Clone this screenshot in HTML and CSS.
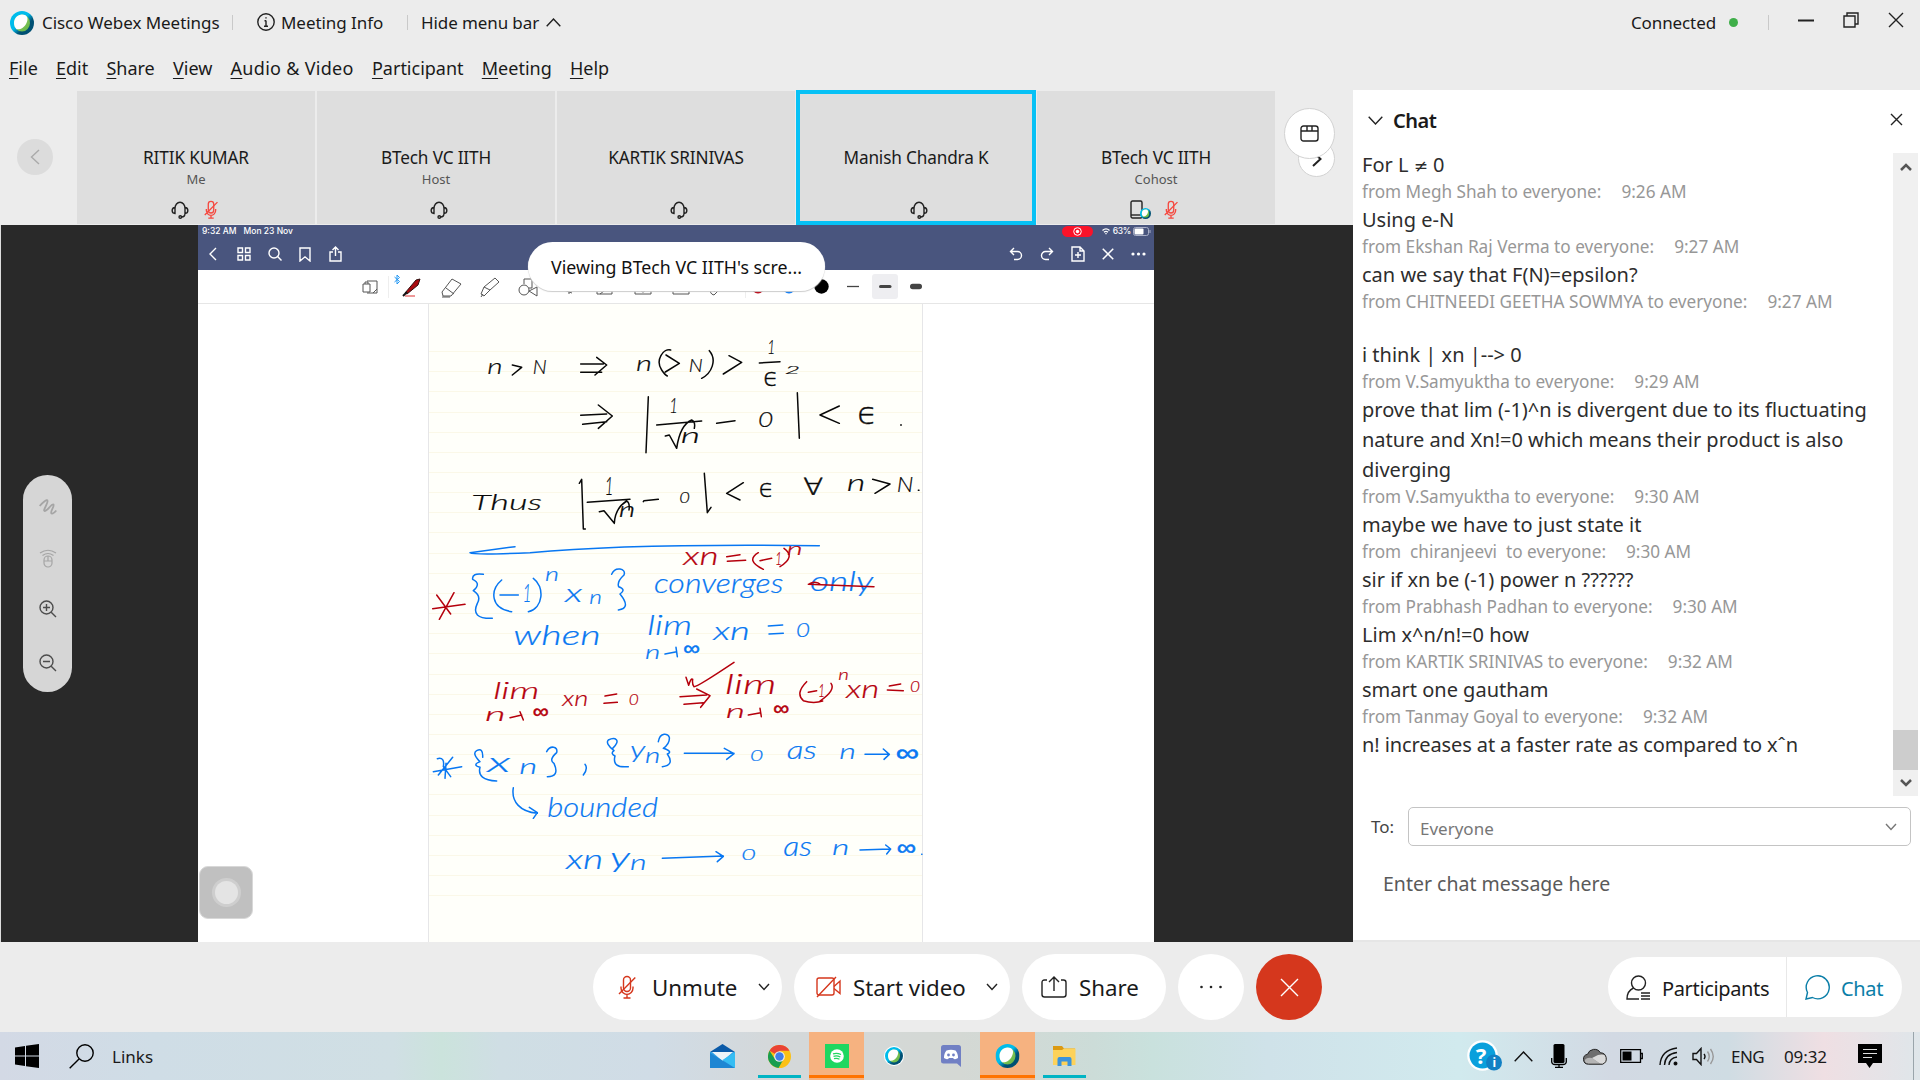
FILE: index.html
```html
<!DOCTYPE html>
<html lang="en">
<head>
<meta charset="utf-8">
<title>Cisco Webex Meetings</title>
<link rel="stylesheet" href="styles.css">
</head>
<body>
<svg class="defs" width="0" height="0">
  <defs>
    <linearGradient id="ring" x1="0" y1="0" x2="1" y2="1"><stop offset=".45" stop-color="#00bceb"/><stop offset=".65" stop-color="#005073"/></linearGradient>
    <linearGradient id="leaf" x1="0" y1="0" x2="1" y2="1"><stop offset="0" stop-color="#a5d867"/><stop offset="1" stop-color="#5fb345"/></linearGradient>
    <symbol id="webex" viewBox="0 0 24 24"><circle cx="12" cy="12" r="12" fill="url(#ring)"/><ellipse cx="12" cy="12" rx="8" ry="8.600" fill="url(#leaf)"/><path d="M4 12C4 7 7.500 3.400 12 3.400C18 3.400 18.500 8 16.500 12C14.500 16.500 10 19 6.500 18.200C4.800 16.500 4 14.500 4 12Z" fill="#fff"/></symbol>
    <symbol id="headset" viewBox="0 0 18 18"><path d="M4 11.500V7.500A5 6.300 0 0 1 14 7.500V11.500M4 6.500C.2 6.800.2 12.300 4 12.500ZM14 6.500C17.800 6.800 17.800 12.300 14 12.500ZM14 12.500C14 14.500 13 16 10.500 16"/><circle cx="9.300" cy="16" r="1.300"/></symbol>
    <symbol id="mic-off" viewBox="0 0 18 24"><rect x="5.500" y="1.500" width="7" height="15" rx="3.500"/><path d="M3 11.500V13A6 6.500 0 0 0 9 19.500A6 6.500 0 0 0 15 13V11.500M9 19.500V23M5.500 23H12.500M1 19L17.300 2.500"/></symbol>
    <symbol id="down" viewBox="0 0 12 8"><path d="M1 1L6 6.500L11 1"/></symbol>
    <symbol id="cross" viewBox="0 0 16 16"><path d="M1 1L15 15M15 1L1 15"/></symbol>
  </defs>
</svg>

<header class="titlebar">
  <svg class="logo" width="24" height="24"><use href="#webex"/></svg>
  <span class="app-name">Cisco Webex Meetings</span>
  <i class="sep sep-a"></i>
  <svg class="icon info" width="18" height="18" viewBox="0 0 18 18"><circle cx="9" cy="9" r="8.200"/><path d="M9 7.500V13.500M7.500 7.800H9M7 13.300H11M9 4.300V5.600"/></svg>
  <span class="meeting-info">Meeting Info</span>
  <i class="sep sep-b"></i>
  <span class="hide-menu">Hide menu bar</span>
  <svg class="icon hide-arrow" width="15" height="9" viewBox="0 0 15 9"><path d="M.7 8.300L7.500 1L14.300 8.300"/></svg>
  <span class="connected">Connected</span>
  <i class="status-dot"></i>
  <i class="sep sep-c"></i>
  <div class="window-buttons">
    <svg class="icon" width="16" height="16" viewBox="0 0 16 16"><path d="M0 8.500H16" stroke-width="2"/></svg>
    <svg class="icon" width="16" height="16" viewBox="0 0 16 16"><path d="M1 4H12V15H1ZM4 4V1H15V12H12" /></svg>
    <svg class="icon" width="16" height="16"><use href="#cross"/></svg>
  </div>
</header>

<nav class="menubar">
  <span><u>F</u>ile</span><span><u>E</u>dit</span><span><u>S</u>hare</span><span><u>V</u>iew</span><span class="wide"><u>A</u>udio &amp; Video</span><span><u>P</u>articipant</span><span><u>M</u>eeting</span><span><u>H</u>elp</span>
</nav>

<main class="main">
  <section class="content">
    <div class="strip">
      <div class="prev"><svg class="icon" width="10" height="16" viewBox="0 0 10 16"><path d="M9 1L1.500 8L9 15"/></svg></div>
      <div class="tiles">
        <div class="tile"><b>RITIK KUMAR</b><small>Me</small><div class="tile-icons"><svg class="icon" width="18" height="18"><use href="#headset"/></svg><svg class="icon muted" width="14" height="19"><use href="#mic-off"/></svg></div></div>
        <div class="tile"><b>BTech VC IITH</b><small>Host</small><div class="tile-icons single"><svg class="icon" width="18" height="18"><use href="#headset"/></svg></div></div>
        <div class="tile"><b>KARTIK SRINIVAS</b><small></small><div class="tile-icons single"><svg class="icon" width="18" height="18"><use href="#headset"/></svg></div></div>
        <div class="tile active"><b>Manish Chandra K</b><small></small><div class="tile-icons single"><svg class="icon" width="18" height="18"><use href="#headset"/></svg></div></div>
        <div class="tile"><b>BTech VC IITH</b><small>Cohost</small><div class="tile-icons device"><svg class="icon" width="22" height="19" viewBox="0 0 22 19"><rect x="1" y="1" width="11" height="17" rx="1.500"/><path d="M1 15H12"/><use href="#webex" x="10" y="8" width="11" height="11" stroke="none"/></svg><svg class="icon muted" width="14" height="19"><use href="#mic-off"/></svg></div></div>
      </div>
      <div class="strip-end">
        <div class="next"><svg class="icon" width="10" height="16" viewBox="0 0 10 16"><path d="M1 1L8.500 8L1 15" stroke-width="2"/></svg></div>
        <div class="layout-button"><svg class="icon" width="19" height="17" viewBox="0 0 19 17"><rect x="1" y="1" width="17" height="15" rx="2.500"/><path d="M1 6H18M7 1V6M12 1V6"/></svg></div>
      </div>
    </div>

    <div class="stage">
      <div class="side-left">
        <div class="tools">
          <svg class="icon dim" width="18" height="18" viewBox="0 0 18 18"><path d="M.7 8C4 4 8 1 8.500 2.500C9.500 5 3.500 12.500 5.500 13C8 13.500 12.500 5.500 14.500 6.500C16 7.500 10.500 14.500 12.500 15.500C14 16 16 14 17.300 12.500" stroke-width="1.800"/></svg>
          <svg class="icon dim" width="18" height="20" viewBox="0 0 18 20"><path d="M1 5Q9-.5 17 5M3.500 7.500Q9 3.500 14.500 7.500"/><rect x="5" y="8" width="8" height="11" rx="4"/><path d="M5 13H13M9 8V13"/></svg>
          <svg class="icon grey" width="18" height="18" viewBox="0 0 18 18"><circle cx="7.500" cy="7.500" r="6.500"/><path d="M12.200 12.200L17 17M4 7.500H11M7.500 4V11"/></svg>
          <svg class="icon grey" width="18" height="18" viewBox="0 0 18 18"><circle cx="7.500" cy="7.500" r="6.500"/><path d="M12.200 12.200L17 17M4 7.500H11"/></svg>
        </div>
      </div>
      <div class="screen">
        <div class="tablet-status">
          <span>9:32 AM</span><span class="date">Mon 23 Nov</span>
          <i class="record"><svg width="9" height="9" viewBox="0 0 9 9"><circle cx="4.500" cy="4.500" r="3.800" fill="none" stroke="#fff"/><circle cx="4.500" cy="4.500" r="1.700" fill="#fff"/></svg></i>
          <svg class="wifi" width="8" height="7" viewBox="0 0 8 7"><path d="M.5 2.500Q4-.8 7.500 2.500M2 4.300Q4 2.500 6 4.300M4 6.300V5" fill="none" stroke="#fff" stroke-width="1.300"/></svg>
          <span class="percent">63%</span>
          <svg width="18" height="9" viewBox="0 0 18 9"><rect x=".5" y=".5" width="15" height="8" rx="2" fill="none" stroke="#aab0c8"/><rect x="1.500" y="1.500" width="9" height="6" rx="1" fill="#fff"/><path d="M17 3V6" stroke="#aab0c8"/></svg>
        </div>
        <div class="tablet-nav">
          <div class="nav-left">
            <svg class="icon" width="10" height="14" viewBox="0 0 10 14"><path d="M8 1L2 7L8 13"/></svg>
            <svg class="icon" width="14" height="14" viewBox="0 0 14 14"><path d="M1 1H5.500V5.500H1ZM8.500 1H13V5.500H8.500ZM1 8.500H5.500V13H1ZM8.500 8.500H13V13H8.500Z"/></svg>
            <svg class="icon" width="14" height="14" viewBox="0 0 14 14"><circle cx="6" cy="6" r="5"/><path d="M9.600 9.600L13.500 13.500"/></svg>
            <svg class="icon" width="12" height="15" viewBox="0 0 12 15"><path d="M1 1H11V14L6 9.800L1 14Z"/></svg>
            <svg class="icon" width="13" height="16" viewBox="0 0 13 16"><path d="M4 6H1V15H12V6H9M6.500 10V1M3.500 4L6.500 1L9.500 4"/></svg>
          </div>
          <div class="nav-right">
            <svg class="icon" width="14" height="14" viewBox="0 0 14 14"><path d="M5 1L1.500 4.500L5 8M1.500 4.500H8.500A4 4 0 0 1 8.500 12.500H5"/></svg>
            <svg class="icon" width="14" height="14" viewBox="0 0 14 14"><path d="M9 1L12.500 4.500L9 8M12.500 4.500H5.500A4 4 0 0 0 5.500 12.500H9"/></svg>
            <svg class="icon" width="14" height="16" viewBox="0 0 14 16"><path d="M1 1H9L13 5V15H1ZM9 1V5H13M7 6V12M4 9H10"/></svg>
            <svg class="icon" width="12" height="12" viewBox="0 0 16 16"><path d="M1 1L15 15M15 1L1 15" stroke-width="2"/></svg>
            <svg width="15" height="4" viewBox="0 0 15 4" fill="#fff"><circle cx="2" cy="2" r="1.600"/><circle cx="7.500" cy="2" r="1.600"/><circle cx="13" cy="2" r="1.600"/></svg>
          </div>
        </div>
        <svg class="tablet-tools" width="956" height="34" viewBox="198 270 956 33">
          <g class="tool-lines">
            <path d="M367 281H377V293H367M363 284H370V292H363ZM365 284V282H368V284M373 293L377 289"/>
            <path d="M452 279L461 284L451 296H443L442 292ZM446 288L454 294M442 297H450"/>
            <path d="M495 278L499 282L490 290L484 287ZM484 287L481 294L484 296L490 290M481 297L483 294"/>
            <circle cx="524" cy="290" r="5"/><path d="M524 284V279H532V288H529M529 291L537 287V296Z"/>
            <path d="M561 289L572 293M566 288L572 291M569 291V294M597 288V294H612V288M600 294L608 288M635 288V294H651V288M640 290Q643 294 646 290M673 288V294H689V288M681 288V291M711 288Q709 294 714 295L721 288M714 292L718 288"/>
          </g>
          <path d="M388.500 276V298M745.500 276V298" stroke="#eee"/>
          <path d="M394.500 277L399.500 281.500L397 284V275L399.500 277.500L394.500 282" fill="none" stroke="#2196f3"/>
          <path d="M405 293L416 280L420 279L418 285L407 294Z" fill="#a80a10" stroke="#301010"/><path d="M403 296L407 292" stroke="#111" stroke-width="2"/><path d="M405 296H415" stroke="#d33"/>
          <circle cx="758" cy="287" r="6.500" fill="#b80010"/><circle cx="789" cy="287" r="6.500" fill="#0879f7"/><circle cx="821.500" cy="286.500" r="7.200" fill="#000"/>
          <rect x="872" y="274" width="26" height="25" rx="3" fill="#eeeef1"/>
          <path d="M847 286.500H859" stroke="#444" stroke-width="1.300"/><rect x="879" y="285" width="12.500" height="3" rx="1.500" fill="#444"/><rect x="910" y="283.800" width="12" height="5.500" rx="2.700" fill="#444"/>
        </svg>
        <div class="page-area">
          <div class="page"></div>
          <svg class="ink" width="496" height="638" viewBox="428 304 496 638">
            <g transform="translate(430 310) scale(.33333)" class="black">
              <text x="172" y="193" font-size="66" textLength="46">n</text><text x="308" y="193" font-size="60" textLength="42">N</text>
              <text x="618" y="184" font-size="66" textLength="48">n</text><text x="776" y="187" font-size="54" textLength="42">N</text>
              <text x="1012" y="133" font-size="60" textLength="24">1</text><text class="sym" x="1000" y="227" font-size="72" textLength="46">ϵ</text><text x="1064" y="193" font-size="36" textLength="46">2</text>
              <text x="718" y="310" font-size="66" textLength="26">1</text><text x="752" y="398" font-size="66" textLength="58">n</text><text x="984" y="352" font-size="66" textLength="46">0</text><text class="sym" x="1282" y="341" font-size="92" textLength="60">ϵ</text>
              <text x="124" y="600" font-size="66" textLength="212">Thus</text><text x="524" y="555" font-size="76" textLength="26">1</text><text x="566" y="622" font-size="62" textLength="50">n</text><text x="748" y="578" font-size="48" textLength="32">0</text>
              <text class="sym" x="986" y="562" font-size="76" textLength="46">ϵ</text><text class="sym" x="1120" y="556" font-size="70" textLength="60">∀</text><text x="1250" y="542" font-size="70" textLength="56">n</text><text x="1400" y="546" font-size="64" textLength="50">N</text>
              <path d="M247 165L275 172L247 195M452 162H520M452 187H515M500 142L530 165L495 195M722 120C700 115 675 150 695 180Q705 195 712 198M708 135L748 160L706 186M838 122C862 150 845 190 815 205M897 137L935 157L880 192M988 159L1050 155"/>
              <path d="M452 316L530 312M458 343L530 335M505 285L547 318L505 355M655 260L648 428M680 345L815 333M706 378L718 375L740 415Q750 345 785 330Q797 335 793 355M860 340L915 332M1102 248L1108 385M1228 288L1170 315L1228 340M1412 345h2"/>
              <path d="M448 520L455 508L460 657H466M472 577L600 568M508 605L522 602L553 640Q555 595 590 573Q600 578 597 600M640 575L642 572L685 568M823 490L832 608L843 592M940 518L890 550L930 570M1328 508L1380 522L1335 550M1465 541h2"/>
            </g>
            <g transform="translate(430 540) scale(.33333)" class="blue">
              <path d="M255 20L120 38Q130 46 300 38Q600 10 1168 17M160 103Q125 98 128 118Q155 130 130 152Q155 168 142 190Q120 237 187 235M215 120C180 150 180 205 245 215M210 165H265M310 115C345 140 340 205 295 215M545 103C555 78 590 85 582 105Q560 125 566 140Q590 148 570 162Q605 205 565 210M705 342L740 335M738 322L742 350M1015 258L1058 255M1017 282L1060 280"/>
              <text x="278" y="186" font-size="78" textLength="26">1</text><text x="345" y="123" font-size="56" textLength="42">n</text><text x="405" y="185" font-size="76" textLength="52">x</text><text x="478" y="192" font-size="60" textLength="38">n</text>
              <text x="672" y="158" font-size="80" textLength="388">converges</text><text x="1140" y="152" font-size="80" textLength="190">only</text>
              <text x="250" y="315" font-size="80" textLength="262">when</text><text x="652" y="284" font-size="80" textLength="134">lim</text><text x="645" y="356" font-size="56" textLength="46">n</text><text class="sym" x="760" y="344" font-size="60" textLength="50">∞</text>
              <text x="850" y="300" font-size="78" textLength="110">xn</text><text x="1098" y="290" font-size="56" textLength="42">0</text>
            </g>
            <g transform="translate(430 540) scale(.33333)" class="red">
              <text x="760" y="74" font-size="74" textLength="106">xn</text><text x="1036" y="74" font-size="50" textLength="20">1</text><text x="1070" y="46" font-size="50" textLength="48">n</text>
              <text x="190" y="478" font-size="70" textLength="138">lim</text><text x="165" y="544" font-size="58" textLength="62">n</text><text class="sym" x="308" y="534" font-size="60" textLength="48">∞</text><text x="397" y="498" font-size="66" textLength="78">xn</text><text x="596" y="495" font-size="46" textLength="30">0</text>
              <text x="885" y="462" font-size="84" textLength="154">lim</text><text x="887" y="533" font-size="58" textLength="58">n</text><text class="sym" x="1030" y="524" font-size="60" textLength="48">∞</text><text x="1165" y="470" font-size="50" textLength="20">1</text><text x="1225" y="420" font-size="46" textLength="32">n</text><text x="1248" y="474" font-size="76" textLength="100">xn</text><text x="1440" y="455" font-size="46" textLength="30">0</text>
              <path d="M890 50L930 44M892 64L947 61M985 38Q945 62 1000 88M990 62L1025 55M1062 25Q1098 50 1050 80M20 165L62 222M72 158L28 238M8 206L105 193M240 533L275 525M270 515L280 540M525 468L560 462M522 490L562 487M768 412L776 436Q783 412 788 418Q786 434 792 440Q800 442 912 367M750 470L830 465M762 493L820 488M800 447L840 467L812 502M955 525L992 518M990 505L994 530M1130 425Q1095 460 1120 482Q1150 492 1178 483M1135 457L1160 452M1203 430Q1218 450 1170 483M1378 438L1412 432M1372 450L1420 452"/>
              <path d="M1135 133L1332 140M1140 130Q1160 122 1172 134" stroke-width="6"/>
            </g>
            <g transform="translate(430 730) scale(.33333)" class="blue">
              <path d="M22 86Q45 80 40 110L62 140M68 82L25 135M48 100L45 145M10 125L95 110M158 82Q160 52 140 62Q125 70 150 95Q125 105 150 112Q140 150 200 153M350 65C360 45 385 48 380 68Q355 90 372 100Q390 140 352 140M465 103Q475 115 460 135M548 55C575 30 555 20 535 30Q525 40 552 62Q540 70 555 78Q545 115 595 110M685 35C690 5 715 10 718 22Q720 40 700 55Q730 65 712 72Q735 105 697 110M763 70H912M883 55L912 71L890 88M1305 73H1375M1360 57L1378 73L1362 88M250 173C243 215 270 245 322 250M298 232L322 248L310 265M697 385L880 378M858 365L880 379L862 395M1290 360L1380 357M1367 345L1382 357L1370 372M1475 373h1"/>
              <text x="172" y="126" font-size="84" textLength="70">x</text><text x="268" y="132" font-size="62" textLength="54">n</text><text x="600" y="84" font-size="72" textLength="46">y</text><text x="645" y="98" font-size="62" textLength="46">n</text>
              <text x="960" y="92" font-size="48" textLength="40">0</text><text x="1070" y="88" font-size="78" textLength="90">as</text><text x="1228" y="88" font-size="62" textLength="50">n</text><text class="sym" x="1397" y="94" font-size="72" textLength="70">∞</text>
              <text x="352" y="260" font-size="82" textLength="332">bounded</text>
              <text x="408" y="418" font-size="80" textLength="112">xn</text><text x="540" y="412" font-size="84" textLength="60">y</text><text x="600" y="420" font-size="66" textLength="50">n</text>
              <text x="934" y="390" font-size="48" textLength="44">0</text><text x="1060" y="377" font-size="80" textLength="86">as</text><text x="1206" y="375" font-size="62" textLength="52">n</text><text class="sym" x="1400" y="374" font-size="66" textLength="58">∞</text>
            </g>
          </svg>
          <div class="assistive"><i></i></div>
        </div>
        <div class="viewing">Viewing BTech VC IITH's scre...</div>
      </div>
    </div>
  </section>

  <aside class="chat">
    <div class="chat-head">
      <svg class="icon" width="15" height="9" viewBox="0 0 15 9"><path d="M.7 .7L7.500 8L14.300 .7"/></svg>
      <h2>Chat</h2>
      <svg class="icon chat-close" width="13" height="13" viewBox="0 0 13 13"><path d="M1 1L12 12M12 1L1 12"/></svg>
    </div>
    <div class="chat-body">
      <div class="messages">
        <p class="msg">For L <span class="neq">≠</span> 0</p>
        <p class="meta">from Megh Shah to everyone:<time>9:26 AM</time></p>
        <p class="msg">Using e-N</p>
        <p class="meta">from Ekshan Raj Verma to everyone:<time>9:27 AM</time></p>
        <p class="msg">can we say that F(N)=epsilon?</p>
        <p class="meta gap">from CHITNEEDI GEETHA SOWMYA to everyone:<time>9:27 AM</time></p>
        <p class="msg">i think | xn |--&gt; 0</p>
        <p class="meta">from V.Samyuktha to everyone:<time>9:29 AM</time></p>
        <p class="msg">prove that lim (-1)^n is divergent due to its fluctuating<br>nature and Xn!=0 which means their product is also<br>diverging</p>
        <p class="meta">from V.Samyuktha to everyone:<time>9:30 AM</time></p>
        <p class="msg">maybe we have to just state it</p>
        <p class="meta">from&nbsp; chiranjeevi&nbsp; to everyone:<time>9:30 AM</time></p>
        <p class="msg">sir if xn be (-1) power n ??????</p>
        <p class="meta">from Prabhash Padhan to everyone:<time>9:30 AM</time></p>
        <p class="msg">Lim x^n/n!=0 how</p>
        <p class="meta">from KARTIK SRINIVAS to everyone:<time>9:32 AM</time></p>
        <p class="msg">smart one gautham</p>
        <p class="meta">from Tanmay Goyal to everyone:<time>9:32 AM</time></p>
        <p class="msg last">n! increases at a faster rate as compared to xˆn</p>
      </div>
      <div class="scrollbar">
        <svg class="icon" width="12" height="10" viewBox="0 0 12 10"><path d="M1 8L6 3L11 8"/></svg>
        <i class="thumb"></i>
        <svg class="icon" width="12" height="10" viewBox="0 0 12 10"><path d="M1 2L6 7L11 2"/></svg>
      </div>
    </div>
    <div class="to-row"><span>To:</span><div class="select"><span>Everyone</span><svg class="icon" width="12" height="8"><use href="#down"/></svg></div></div>
    <div class="entry">Enter chat message here</div>
  </aside>
</main>

<footer class="controls">
  <div class="center-controls">
    <div class="pill unmute"><svg class="icon red-icon" width="18" height="24"><use href="#mic-off"/></svg><span>Unmute</span><svg class="icon" width="12" height="8"><use href="#down"/></svg></div>
    <div class="pill video"><svg class="icon red-icon" width="25" height="22" viewBox="0 0 25 22"><rect x="1" y="2" width="17" height="17" rx="2"/><path d="M18 10.500L24 5V17.500L18 12.500M1 21L20 1"/></svg><span>Start video</span><svg class="icon" width="12" height="8"><use href="#down"/></svg></div>
    <div class="pill share"><svg class="icon" width="26" height="22" viewBox="0 0 26 22"><path d="M6 4H3.500Q1 4 1 6.500V18.500Q1 21 3.500 21H22.500Q25 21 25 18.500V6.500Q25 4 22.500 4H20M13 15V1M8 6L13 1L18 6"/></svg><span>Share</span></div>
    <div class="pill round"><svg width="22" height="4" viewBox="0 0 22 4" fill="#222"><circle cx="1.500" cy="2" r="1.300"/><circle cx="11" cy="2" r="1.300"/><circle cx="20.500" cy="2" r="1.300"/></svg></div>
    <div class="pill round leave"><svg class="icon" width="19" height="19" viewBox="0 0 19 19"><path d="M1 1L18 18M18 1L1 18"/></svg></div>
  </div>
  <div class="panel-controls">
    <div class="participants"><svg class="icon" width="25" height="25" viewBox="0 0 25 25"><circle cx="12.500" cy="8" r="7"/><path d="M7.500 13Q1 16 1 24H13M15 18H24M15 21H24M15 24H24"/></svg><span>Participants</span></div>
    <div class="chat-toggle"><svg class="icon" width="25" height="25" viewBox="0 0 25 25"><path d="M1 24L2.500 17.500A11.500 11.500 0 1 1 7.500 22.500Z"/></svg><span>Chat</span></div>
  </div>
</footer>

<footer class="taskbar">
  <div class="start"><svg width="24" height="24" viewBox="0 0 24 24"><path d="M0 3.500L10 2V11.500H0ZM11 1.800L24 0V11.500H11ZM0 12.500H10V22L0 20.500ZM11 12.500H24V24L11 22.200Z"/></svg>
    <svg class="icon" width="25" height="25" viewBox="0 0 25 25"><circle cx="16" cy="9" r="8.200"/><path d="M10 15L.7 24.300"/></svg><span>Links</span></div>
  <div class="apps">
    <div class="app"><svg width="25" height="24" viewBox="0 0 25 24"><path d="M0 8L12.500 0L25 8Z" fill="#0b5aa8"/><path d="M0 8H25V24H0Z" fill="#2f9fe5"/><path d="M2 8H23L12.500 17Z" fill="#eef4f8"/><path d="M0 9L25 24H0Z" fill="#1d86d3"/><path d="M12.500 16L25 8V24Z" fill="#35bdf3"/></svg></div>
    <div class="app open"><svg width="23" height="23" viewBox="0 0 24 24"><circle cx="12" cy="12" r="12" fill="#fbc116"/><path d="M12 12L1.600 6A12 12 0 0 1 22.400 6H12Z" fill="#ea4335"/><path d="M1.600 6A12 12 0 0 0 11 24L16 15L12 12L6.500 13.500Z" fill="#189d50"/><circle cx="12" cy="12" r="5.600" fill="#eee"/><circle cx="12" cy="12" r="4.400" fill="#427ee8"/></svg></div>
    <div class="app hot"><svg width="24" height="24" viewBox="0 0 24 24"><path d="M0 0H24V24H0Z" fill="#1ed760"/><circle cx="12" cy="12" r="6.800" fill="#fff"/><path d="M8 9.800Q12 8.500 16 10.500M8.500 12.300Q12 11.200 15.300 13M9 14.700Q12 13.800 14.500 15.300" fill="none" stroke="#1ed760" stroke-width="1.300"/></svg></div>
    <div class="app"><svg width="20" height="20" viewBox="0 0 20 20"><circle cx="10" cy="10" r="10" fill="#fff"/><use href="#webex" x="1" y="1" width="18" height="18"/></svg></div>
    <div class="app"><svg width="20" height="22" viewBox="0 0 20 22"><path d="M2.500 0H17.500Q20 0 20 2.500V22L16 18.500H2.500Q0 18.500 0 16V2.500Q0 0 2.500 0Z" fill="#7180c4"/><path d="M3 13Q3 8 5.500 5.500Q10 4 14.500 5.500Q17 8 17 13Q15 14.500 13 14L12 13H8L7 14Q5 14.500 3 13Z" fill="#fff"/><circle cx="7.500" cy="10" r="1.400" fill="#7180c4"/><circle cx="12.500" cy="10" r="1.400" fill="#7180c4"/></svg></div>
    <div class="app hot"><svg width="25" height="24" viewBox="0 0 24 24"><use href="#webex"/></svg></div>
    <div class="app open"><svg width="23" height="20" viewBox="0 0 23 20"><path d="M0 0H9L11 2.500H22V10H0Z" fill="#dc9a12"/><path d="M0 4H9L11 2.500H22.500V19H0Z" fill="#fdd25a"/><path d="M4.500 20V13Q4.500 11 6.500 11H16.500Q18.500 11 18.500 13V20H14.500V15.500H8.500V20Z" fill="#3a93dc"/></svg></div>
  </div>
  <div class="tray">
    <svg class="t-help" width="35" height="32" viewBox="0 0 35 32"><circle cx="15.500" cy="15.500" r="15.300" fill="#fff"/><circle cx="15.500" cy="15.500" r="13" fill="#0aa0dc"/><circle cx="27" cy="22.500" r="8" fill="#1180c4"/><text x="14" y="23.500" class="help-q">?</text><text x="27.300" y="27.200" class="help-i">i</text></svg>
    <svg class="icon t-up" width="19" height="11" viewBox="0 0 19 11"><path d="M.7 10.300L9.500 1L18.300 10.300"/></svg>
    <svg class="t-mic" width="16" height="24" viewBox="0 0 16 24"><rect x="2.500" y="0" width="11" height="19" rx="1.500"/><path d="M.7 14V18Q1 20.500 4 20.500H12Q15 20.500 15.300 18V14M8 20.500V23.500M4 23.500H12" fill="none" stroke="#000" stroke-width="1.300"/></svg>
    <svg class="t-cloud" width="25" height="17" viewBox="0 0 25 17"><path d="M5.500 16.200A5 5 0 0 1 4.500 6.300A7.200 7.200 0 0 1 17.500 4.800A5.900 5.900 0 0 1 19.500 16.200Z" fill="#6e6e6e"/><path d="M1.500 13Q3 9 9 10L17.500 16H5.500Q2.500 15.500 1.500 13Z" fill="#b5b5b5"/><path d="M9 10L15 7Q22 5 24 10Q24.500 16 19.500 16H17.500Z" fill="#dadada"/><path d="M5.500 16.200A5 5 0 0 1 4.500 6.300A7.200 7.200 0 0 1 17.500 4.800A5.900 5.900 0 0 1 19.500 16.200Z" fill="none" stroke="#222"/></svg>
    <svg class="t-bat" width="23" height="14" viewBox="0 0 23 14"><path d="M.7 .7H20.500V13.300H.7ZM20.500 4.500H22.300V9.500H20.500" fill="none" stroke="#000" stroke-width="1.300"/><path d="M2.500 2.500H11.500V11.500H2.500Z"/></svg>
    <svg class="icon t-wifi" width="19" height="19" viewBox="0 0 19 19"><path d="M1 18Q2 3 18 1M5.500 18Q6 7 18 5.500M10 18Q10.500 11 18 10"/><circle cx="16.500" cy="16.500" r="1.300" fill="#000"/></svg>
    <svg class="icon t-vol" width="23" height="19" viewBox="0 0 23 19"><path d="M1 6.500H4.500L9 1.500V17.500L4.500 12.500H1ZM12 7Q14 9.500 12 12"/><path d="M15.500 4.500Q19 9.500 15.500 14.500M18.500 2Q24 9.500 18.500 17" stroke="#999"/></svg>
    <span class="t-lang">ENG</span><span class="t-time">09:32</span>
    <svg class="t-note" width="24" height="24" viewBox="0 0 24 24"><path d="M0 0H24V19H15L11.500 24L8 19H0Z"/><path d="M5 5.500H19M5 9.500H19M5 13.500H14" stroke="#ddd" stroke-width="1.200"/></svg>
  </div>
</footer>
<script src="ink.js"></script>
</body>
</html>
```

FILE: ink.js
```js
// Stretch the note's letters themselves, not the gaps between them, to each text's set length.
document.querySelectorAll(".ink text").forEach(function (text) {
  text.setAttribute("lengthAdjust", "spacingAndGlyphs");
});
```

FILE: styles.css
```css
* { box-sizing: border-box; }
body { margin: 0; width: 1920px; height: 1080px; overflow: hidden; display: flex; flex-direction: column; background: #ececec; color: #1a1a1a; font-family: "Noto Sans", "Open Sans", sans-serif; font-size: 17px; }
p, h2 { margin: 0; }
svg { display: block; flex: none; }
span, b, small, time { white-space: pre; }
.defs { position: absolute; }
.icon { fill: none; stroke: #222; stroke-width: 1.4; }

.titlebar { height: 46px; flex: none; display: flex; align-items: center; padding: 0 16px 7px 10px; }
.logo { margin: 6px 8px 0 0; }
.titlebar span { line-height: 24px; padding-top: 7px; }
.titlebar .app-name { width: 190px; letter-spacing: -.05px; }
.sep { width: 1px; height: 15px; background: #c9c9c9; margin-top: 6px; }
.info { margin: 5px 6px 0 24px; }
.titlebar .meeting-info { width: 126px; letter-spacing: -.05px; }
.titlebar .hide-menu { margin-left: 13px; width: 125px; letter-spacing: -.1px; }
.hide-arrow { margin-top: 5px; }
.titlebar .connected { margin-left: auto; letter-spacing: -.1px; }
.status-dot { width: 9px; height: 9px; border-radius: 50%; background: #3fae49; margin: 5px 30px 0 13px; }
.window-buttons { display: flex; gap: 29px; margin-left: 29px; }

.menubar { height: 44px; flex: none; display: flex; gap: 18.200px; padding: 10px 9px; line-height: 24px; font-size: 18px; }
.menubar .wide { letter-spacing: .3px; }
.menubar u { text-underline-offset: 3px; text-decoration-thickness: 1px; }

.main { height: 852px; flex: none; display: flex; }
.content { width: 1353px; display: flex; flex-direction: column; }
.strip { height: 135px; display: flex; }
.prev { width: 36px; height: 36px; margin: 49px 24px 0 17px; border-radius: 50%; background: #dcdcdc; display: flex; align-items: center; justify-content: center; }
.prev .icon { stroke: #aaa; }
.tiles { display: flex; gap: 2px; width: 1198px; padding-top: 1px; }
.tile { flex: 1; height: 133px; background: #dedede; display: flex; flex-direction: column; align-items: center; padding-top: 54px; }
.tile b { font-weight: 400; font-size: 17.200px; line-height: 25px; letter-spacing: -.15px; }
.tile small { font-size: 13px; line-height: 18px; height: 30px; color: #555; }
.tile.active { box-shadow: 0 0 0 1px #07c1f5, inset 0 0 0 3px #07c1f5; }
.tile-icons { display: flex; gap: 15px; align-items: center; height: 19px; padding-right: 4px; }
.tile-icons.single { padding: 0 0 0 6px; }
.tile-icons.device { gap: 12px; padding-right: 4px; }
.muted { stroke: #f5483f; stroke-width: 1.7; }
.strip-end { width: 78px; position: relative; }
.next, .layout-button { position: absolute; background: #fff; border: 1px solid #d2d2d2; border-radius: 50%; display: flex; align-items: center; justify-content: center; }
.next { left: 23px; top: 50px; width: 37px; height: 37px; }
.layout-button { left: 9px; top: 18px; width: 51px; height: 51px; }

.stage { height: 717px; display: flex; background: #292929; }
.side-left { width: 198px; border-left: 1px solid #ddd; padding: 250px 0 0 22px; }
.tools { width: 49px; height: 217px; border-radius: 25px; background: #d6d6d6; display: flex; flex-direction: column; align-items: center; gap: 32px; padding-top: 23px; }
.tools .icon:last-child { margin-top: 4px; }
.dim { stroke: #a5a5a5; stroke-width: 1.2; }
.grey { stroke: #4d4d4d; }
.screen { width: 956px; position: relative; background: #fff; overflow: hidden; }
.tablet-status { height: 13px; background: #49557e; color: #fff; font: 500 8.500px/13px Inter, sans-serif; display: flex; align-items: center; padding: 0 3px 0 4px; }
.date { margin-left: 7px; }
.record { width: 31px; height: 11px; margin: 0 9px 0 auto; border-radius: 6px; background: #fa1329; display: flex; align-items: center; justify-content: center; }
.percent { margin: 0 2px 0 3px; letter-spacing: -.3px; }
.tablet-nav { height: 32px; background: #49557e; display: flex; justify-content: space-between; align-items: center; padding: 0 8px 0 10px; }
.tablet-nav .icon { stroke: #fff; }
.nav-left, .nav-right { display: flex; align-items: center; gap: 17px; }
.nav-left .icon:first-child { margin-right: 2px; }
.nav-left .icon:last-child { margin-left: 1px; }
.tablet-tools { border-bottom: 1px solid #e6e6e6; }
.tool-lines { fill: none; stroke: #555; stroke-width: 1; }
.page-area { height: 638px; position: relative; padding-left: 230px; }
.page { width: 495px; height: 638px; background: repeating-linear-gradient(#fffffa 0 19.150px, #fbf8e8 19.150px 20.150px) 0 28px / 100% 565px no-repeat #fffffa; border: solid #e6e6e8; border-width: 0 1px; }
.ink { position: absolute; left: 230px; top: 0; font-family: Lato, "DejaVu Sans", sans-serif; font-style: italic; font-weight: 300; }
.ink path { fill: none; stroke-width: 4.500; stroke-linecap: round; stroke-linejoin: round; }
.black { fill: #080808; stroke: #080808; }
.blue { fill: #0877f2; stroke: #0877f2; }
.red { fill: #b5000c; stroke: #b5000c; }
.ink text { stroke-width: .6; }
.ink .sym { font-family: "DejaVu Sans", sans-serif; font-style: normal; font-weight: 200; stroke-width: 1.500; }
.assistive { position: absolute; left: 1px; top: 562px; width: 54px; height: 53px; border-radius: 9px; background: #c0c0c0; border: 1px solid #d8d8d8; display: flex; align-items: center; justify-content: center; }
.assistive i { width: 23px; height: 23px; border-radius: 50%; background: #e4e4e4; box-shadow: 0 0 0 3px #cecece; }
.viewing { position: absolute; left: 330px; top: 17px; width: 297px; height: 49px; border-radius: 25px; background: #fff; box-shadow: 0 1px 1px #ccc; text-align: center; font-size: 17.800px; line-height: 51px; color: #111; white-space: nowrap; }

.chat { width: 567px; background: #fff; border-bottom: 2px solid #e6e6e6; }
.chat-head { height: 60px; display: flex; align-items: center; padding: 1px 17px 0 15px; }
.chat-head h2 { margin-left: 10px; font-size: 20px; font-weight: 600; line-height: 28px; letter-spacing: -.5px; }
.chat-close { margin-left: auto; margin-bottom: 2px; }
.chat-body { height: 646px; display: flex; justify-content: space-between; padding-right: 2px; }
.messages { padding-left: 9px; color: #2d2d2d; }
.msg { font-size: 20px; line-height: 30px; white-space: nowrap; }
.msg.last { letter-spacing: -.1px; }
.neq { font-family: "DejaVu Sans", sans-serif; font-size: 17px; line-height: 1; }
.meta { font-size: 17.200px; line-height: 25px; margin: -1px 0 1px; color: #979797; white-space: nowrap; }
.meta.gap { margin-bottom: 26px; }
.meta time { margin-left: 20px; }
.scrollbar { width: 25px; height: 643px; margin-top: 3px; background: #f0f0f0; display: flex; flex-direction: column; align-items: center; padding: 9px 0 8px; }
.scrollbar .icon { stroke: #555; stroke-width: 2.500; }
.thumb { width: 25px; height: 40px; margin: auto 0 8px; background: #cdcdcd; }
.to-row { display: flex; align-items: center; padding: 11px 9px 0 18px; height: 50px; color: #444; }
.select { margin-left: auto; width: 503px; height: 39px; border: 1px solid #c4c4c4; border-radius: 5px; display: flex; align-items: center; justify-content: space-between; padding: 0 13px 0 11px; color: #777; }
.select span { padding-top: 3px; }
.select .icon { stroke: #777; }
.entry { padding: 24px 30px; font-size: 19.500px; line-height: 28px; color: #5a5a5a; }

.controls { height: 90px; flex: none; display: flex; justify-content: space-between; align-items: center; padding: 0 18px 0 593px; }
.center-controls { display: flex; gap: 12px; }
.pill { height: 66px; border-radius: 33px; background: #fff; display: flex; align-items: center; font-size: 22.300px; }
.pill span { line-height: 28px; padding-top: 2px; }
.unmute { width: 189px; padding-left: 25px; }
.unmute span { margin-left: 16px; width: 106px; }
.video { width: 216px; padding-left: 22px; }
.video span { margin-left: 12px; width: 133px; }
.share { width: 144px; padding-left: 19px; }
.share span { margin-left: 12px; }
.round { width: 66px; justify-content: center; }
.leave { background: #d5371d; }
.leave .icon { stroke: #fff; }
.red-icon { stroke: #d5371d; }
.panel-controls { display: flex; width: 294px; height: 60px; border-radius: 30px; background: #fff; font-size: 20px; letter-spacing: -.35px; }
.participants, .chat-toggle { display: flex; align-items: center; }
.panel-controls span { padding-top: 2px; }
.participants { width: 179px; padding-left: 18px; gap: 11px; border-right: 1px solid #e8e8e8; }
.chat-toggle { padding-left: 18px; gap: 11px; color: #0a7ea8; }
.chat-toggle .icon { stroke: #0a7ea8; }

.taskbar { height: 48px; flex: none; display: flex; background: linear-gradient(90deg, #d3d9e5 0, #cfdde6 8%, #d0dfe4 20.500%, #cbe3dc 23%, #cfdee4 26%, #d0dce6 34%, #d4d8da 40%, #d4d8d4 50%, #ccdcd8 57%, #c9e1dd 60%, #cfe2e9 66%, #d1eaee 76%, #d2d9e3 84%, #cfdce3 90%, #efdfe3 95%, #dfe6ea 100%); }
.start { width: 695px; display: flex; align-items: center; padding-left: 15px; }
.start .icon { margin: 0 18px 0 30px; stroke: #000; }
.apps { width: 600px; display: flex; gap: 2px; }
.app { width: 55px; height: 48px; display: flex; align-items: center; justify-content: center; position: relative; }
.app.open::after, .app.hot::after { content: ""; position: absolute; left: 6px; right: 6px; bottom: 2px; height: 3px; background: #00b4c4; }
.app.hot { background: #f6b280; }
.app.hot::after { left: 0; right: 0; background: #ff7300; }
.tray { flex: 1; display: flex; align-items: center; margin-left: 172px; border-right: 1px solid #9aa5ab; margin-right: 6px; }
.tray .icon { stroke: #111; }
.t-help { overflow: visible; }
.help-q { font: 700 22px "Noto Sans", sans-serif; fill: #fff; text-anchor: middle; }
.help-i { font: 700 12px "Noto Sans", sans-serif; fill: #fff; text-anchor: middle; }
.t-up { margin-left: 12px; }
.t-mic { margin-left: 18px; }
.t-cloud { margin-left: 16px; }
.t-bat { margin-left: 12px; }
.t-wifi { margin-left: 16px; }
.t-vol { margin-left: 14px; }
.t-lang { margin-left: 16px; width: 53px; letter-spacing: -.5px; }
.t-time { width: 74px; letter-spacing: -.1px; }
```
